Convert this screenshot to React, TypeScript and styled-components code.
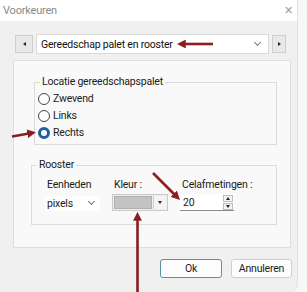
import styled, { createGlobalStyle } from 'styled-components'

const GlobalStyle = createGlobalStyle`
  html, body {
    margin: 0;
    padding: 0;
    background: #f7f7f7;
  }
  body {
    font-family: Roboto, 'Noto Sans', sans-serif;
    font-size: 10.5px;
    letter-spacing: -0.2px;
    color: #1b1b1b;
  }
`

const ARROW = '#8b1c22'
const TEXT_SIZE = '10.5px'

export default function App() {
  return (
    <Screen>
      <GlobalStyle />
      <Window>
        <TitleBar>
          <span className="title">Voorkeuren</span>
          <span className="close">✕</span>
        </TitleBar>

        <Body>
          <NavRow>
            <StepButton $w={18}>
              <TinyTriangle $dir="left" />
            </StepButton>
            <PageSelect>
              <span>Gereedschap palet en rooster</span>
              <Chevron />
            </PageSelect>
            <StepButton $w={14}>
              <TinyTriangle $dir="right" />
            </StepButton>
          </NavRow>

          <Panel>
            <GroupBox $left={20} $height={63}>
              <Legend>Locatie gereedschapspalet</Legend>
              <RadioList>
                <RadioRow>
                  <Radio $checked={false} />
                  Zwevend
                </RadioRow>
                <RadioRow>
                  <Radio $checked={false} />
                  Links
                </RadioRow>
                <RadioRow>
                  <Radio $checked />
                  Rechts
                </RadioRow>
              </RadioList>
            </GroupBox>

            <GroupBox $left={17} $height={60} $top={20}>
              <Legend>Rooster</Legend>
              <FieldRow>
                <Field $w={55}>
                  <label>Eenheden</label>
                  <UnitSelect>
                    pixels
                    <Chevron />
                  </UnitSelect>
                </Field>
                <Field $w={56}>
                  <label>Kleur :</label>
                  <ColorPicker>
                    <div className="swatch" />
                    <div className="drop">
                      <TinyTriangle $dir="down" />
                    </div>
                  </ColorPicker>
                </Field>
                <Field $w={80}>
                  <label>Celafmetingen :</label>
                  <SpinBox>
                    <span>20</span>
                    <div className="spin">
                      <div>
                        <TinyTriangle $dir="up" />
                      </div>
                      <div>
                        <TinyTriangle $dir="down" />
                      </div>
                    </div>
                  </SpinBox>
                </Field>
              </FieldRow>
            </GroupBox>
          </Panel>

          <ButtonRow>
            <DialogButton $primary>Ok</DialogButton>
            <DialogButton>Annuleren</DialogButton>
          </ButtonRow>
        </Body>
      </Window>

      <Arrows width="307" height="292" viewBox="0 0 307 292">
        <defs>
          <marker id="head" viewBox="0 0 10 10" refX="2" refY="5" markerWidth="3.4" markerHeight="3.4" orient="auto">
            <path d="M0 0 L10 5 L0 10 z" fill={ARROW} />
          </marker>
        </defs>
        <g stroke={ARROW} strokeWidth="2.6" fill="none" markerEnd="url(#head)">
          <line x1="213" y1="44" x2="184" y2="44" />
          <line x1="12" y1="136.5" x2="29" y2="133.5" />
          <line x1="153" y1="173" x2="175" y2="195" />
          <line x1="137.5" y1="292" x2="137.5" y2="219" />
        </g>
      </Arrows>
    </Screen>
  )
}

const Screen = styled.div`
  position: relative;
  width: 307px;
  height: 292px;
  overflow: hidden;
`

const Window = styled.div`
  width: 297px;
  height: 292px;
  background: #f0f0f0;
  border-right: 1px solid #e2e2e2;
  border-bottom-right-radius: 8px;
  display: flex;
  flex-direction: column;
`

const TitleBar = styled.div`
  height: 21px;
  background: #ffffff;
  display: flex;
  align-items: center;
  justify-content: space-between;
  padding: 0 4px 0 3px;

  .title {
    color: #8a8a8a;
    font-size: 11px;
  }

  .close {
    color: #9a9a9a;
    font-size: 11px;
  }
`

const Body = styled.div`
  flex: 1;
  display: flex;
  flex-direction: column;
  padding: 13px 0 0 13px;
`

const NavRow = styled.div`
  display: flex;
  align-items: center;
  gap: 3px;
  height: 20px;
  padding-left: 2px;
`

const StepButton = styled.div<{ $w: number }>`
  width: ${(p) => p.$w}px;
  height: 18px;
  box-sizing: border-box;
  border: 1px solid #cfcfcf;
  background: #e9e9e9;
  display: flex;
  align-items: center;
  justify-content: center;
`

const TinyTriangle = styled.span<{ $dir: 'left' | 'right' | 'up' | 'down' }>`
  width: 0;
  height: 0;
  border: 2.5px solid transparent;
  ${(p) =>
    p.$dir === 'left'
      ? `border-right: 3px solid #222; border-left-width: 0;`
      : p.$dir === 'right'
        ? `border-left: 3px solid #222; border-right-width: 0;`
        : p.$dir === 'up'
          ? `border-bottom: 3px solid #222; border-top-width: 0;`
          : `border-top: 3px solid #222; border-bottom-width: 0;`}
`

const PageSelect = styled.div`
  width: 233px;
  height: 20px;
  box-sizing: border-box;
  background: #ffffff;
  border: 1px solid #dadada;
  display: flex;
  align-items: center;
  justify-content: space-between;
  padding: 0 8px 0 4px;
  font-size: ${TEXT_SIZE};
  color: #111;
`

const Chevron = styled.span`
  width: 4px;
  height: 4px;
  border-right: 1px solid #777;
  border-bottom: 1px solid #777;
  transform: translateY(-2px) rotate(45deg);
`

const Panel = styled.div`
  margin-top: 6px;
  width: 278px;
  height: 188px;
  box-sizing: border-box;
  background: #f9f9f9;
  border: 1px solid #dedede;
  padding-top: 21px;
  display: flex;
  flex-direction: column;
`

const GroupBox = styled.fieldset<{ $left: number; $height: number; $top?: number }>`
  margin: ${(p) => p.$top ?? 0}px 0 0 ${(p) => p.$left}px;
  width: ${(p) => 263 - p.$left}px;
  height: ${(p) => p.$height}px;
  box-sizing: border-box;
  border: 1px solid #dcdcdc;
  padding: 0 0 0 3px;
  position: relative;
`

const Legend = styled.legend`
  position: absolute;
  top: -8px;
  left: 5px;
  padding: 0 2px;
  background: #f9f9f9;
  line-height: 14px;
  font-size: ${TEXT_SIZE};
  color: #1b1b1b;
`

const RadioList = styled.div`
  display: flex;
  flex-direction: column;
  padding-top: 7px;
`

const RadioRow = styled.div`
  display: flex;
  align-items: center;
  gap: 3px;
  height: 17px;
  font-size: ${TEXT_SIZE};
`

const Radio = styled.span<{ $checked: boolean }>`
  width: 12px;
  height: 12px;
  box-sizing: border-box;
  border-radius: 50%;
  border: ${(p) => (p.$checked ? '3.5px solid #1f5f9e' : '1px solid #444')};
  background: #ffffff;
`

const FieldRow = styled.div`
  display: flex;
  gap: 12px;
  padding: 11px 0 0 10px;
`

const Field = styled.div<{ $w: number }>`
  width: ${(p) => p.$w}px;
  display: flex;
  flex-direction: column;
  gap: 2px;

  label {
    font-size: ${TEXT_SIZE};
    line-height: 15px;
    padding-left: 2px;
    white-space: nowrap;
  }
`

const UnitSelect = styled.div`
  height: 15px;
  margin-top: 2px;
  box-sizing: border-box;
  background: #ffffff;
  display: flex;
  align-items: center;
  justify-content: space-between;
  padding: 0 6px 0 2px;
  font-size: ${TEXT_SIZE};
`

const ColorPicker = styled.div`
  height: 17px;
  box-sizing: border-box;
  border: 1px solid #c9c9c9;
  background: #efefef;
  display: flex;
  padding: 1px;
  gap: 1px;

  .swatch {
    flex: 1;
    background: #c3c3c3;
    border: 1px solid #b0b0b0;
  }

  .drop {
    width: 12px;
    background: #f4f4f4;
    border-left: 1px solid #cfcfcf;
    display: flex;
    align-items: center;
    justify-content: center;
  }
`

const SpinBox = styled.div`
  width: 54px;
  height: 17px;
  box-sizing: border-box;
  background: #ffffff;
  border-bottom: 1px solid #8a8a8a;
  display: flex;
  align-items: center;
  justify-content: space-between;
  padding: 0 1px 0 3px;
  font-size: ${TEXT_SIZE};

  .spin {
    display: flex;
    flex-direction: column;
    gap: 1px;
  }

  .spin > div {
    width: 10px;
    height: 7px;
    box-sizing: border-box;
    border: 1px solid #bbbbbb;
    background: #f2f2f2;
    display: flex;
    align-items: center;
    justify-content: center;
  }
`

const ButtonRow = styled.div`
  display: flex;
  justify-content: flex-end;
  gap: 9px;
  margin-top: 11px;
  padding-right: 5px;
`

const DialogButton = styled.div<{ $primary?: boolean }>`
  width: ${(p) => (p.$primary ? 62 : 61)}px;
  height: 19px;
  box-sizing: border-box;
  border-radius: 3px;
  background: #fdfdfd;
  border: 1px solid ${(p) => (p.$primary ? '#5b8fa8' : '#d0d0d0')};
  display: flex;
  align-items: center;
  justify-content: center;
  font-size: ${TEXT_SIZE};
`

const Arrows = styled.svg`
  position: absolute;
  inset: 0;
  pointer-events: none;
`
